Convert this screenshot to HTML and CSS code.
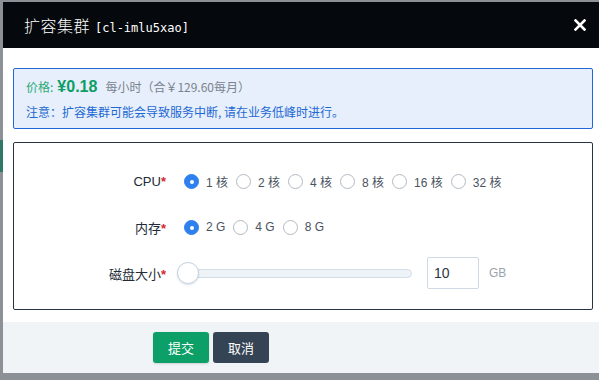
FILE: index.html
```html
<!DOCTYPE html>
<html lang="zh-CN">
<head>
    <meta charset="UTF-8">
    <title>扩容集群</title>
    <link rel="stylesheet" href="styles.css">
</head>
<body>

    <!-- Okno dialogowe -->
    <div class="modal">
        <div class="modal-header">
            <h3 class="modal-title">扩容集群 <span class="cluster-id">[cl-imlu5xao]</span></h3>
            <button class="close-btn" aria-label="关闭">
                <svg width="12" height="12" viewBox="0 0 12 12">
                    <path d="M1.5 1.5 L10.5 10.5 M10.5 1.5 L1.5 10.5" stroke="#fff" stroke-width="2.6" stroke-linecap="square"/>
                </svg>
            </button>
        </div>

        <div class="modal-body">
            <div class="notice">
                <p class="price">
                    <span class="price-label">价格:</span>
                    <span class="price-value">¥0.18</span>
                    <span class="price-unit">每小时（合￥129.60每月）</span>
                </p>
                <p class="warning">注意：扩容集群可能会导致服务中断, 请在业务低峰时进行。</p>
            </div>

            <div class="form-box">
                <div class="form-row">
                    <span class="form-label">CPU<i>*</i></span>
                    <div class="radio-group">
                        <label class="radio checked"><span class="dot"></span>1 核</label>
                        <label class="radio"><span class="dot"></span>2 核</label>
                        <label class="radio"><span class="dot"></span>4 核</label>
                        <label class="radio"><span class="dot"></span>8 核</label>
                        <label class="radio"><span class="dot"></span>16 核</label>
                        <label class="radio"><span class="dot"></span>32 核</label>
                    </div>
                </div>
                <div class="form-row">
                    <span class="form-label">内存<i>*</i></span>
                    <div class="radio-group">
                        <label class="radio checked"><span class="dot"></span>2 G</label>
                        <label class="radio"><span class="dot"></span>4 G</label>
                        <label class="radio"><span class="dot"></span>8 G</label>
                    </div>
                </div>
                <div class="form-row">
                    <span class="form-label">磁盘大小<i>*</i></span>
                    <div class="disk">
                        <div class="slider">
                            <div class="track"></div>
                            <div class="knob"></div>
                        </div>
                        <div class="num-input">10</div>
                        <span class="unit">GB</span>
                    </div>
                </div>
            </div>
        </div>

        <div class="modal-footer">
            <button class="btn btn-submit">提交</button>
            <button class="btn btn-cancel">取消</button>
        </div>
    </div>

</body>
</html>
```

FILE: styles.css
```css
body {
    margin: 0;
    height: 380px;
    overflow: hidden;
    font-family: "Liberation Sans", "Noto Sans CJK SC", sans-serif;
    background-color: #8c9197;
    background-image: linear-gradient(#2e7865, #2e7865);
    background-size: 3px 32px;
    background-position: 0 140px;
    background-repeat: no-repeat;
}

/* Okno */
.modal {
    width: 600px;
    margin: 2px 0 0 3px;
    background-color: #fff;
}

.modal-header {
    height: 46px;
    background-color: #05090d;
    display: flex;
    align-items: center;
    justify-content: space-between;
    padding: 0 10px 0 21px;
    box-sizing: border-box;
}

.modal-title {
    margin: 0;
    color: #fff;
    font-size: 16px;
    font-weight: 300;
    letter-spacing: 0.5px;
}

.cluster-id {
    font-family: "DejaVu Sans Mono", monospace;
    font-size: 12px;
    letter-spacing: 0;
}

.close-btn {
    background: none;
    border: none;
    padding: 0;
    width: 12px;
    height: 12px;
    margin-right: 7px;
    display: flex;
}

.modal-body {
    padding: 20px 10px 12px;
}

/* Ramka z cena */
.notice {
    height: 61px;
    box-sizing: border-box;
    background-color: #e6effb;
    border: 1px solid #2068d8;
    border-radius: 2px;
    padding: 9px 12px 0;
    font-size: 12px;
}

.notice p {
    margin: 0;
    font-family: "Noto Sans CJK SC", sans-serif;
}

.price {
    height: 18px;
    display: flex;
    align-items: baseline;
}

.price-label {
    color: #2cab78;
}

.price-value {
    font-family: "Liberation Sans", sans-serif;
    color: #0d9d66;
    font-weight: bold;
    font-size: 16px;
    margin: 0 8px 0 4px;
}

.price-unit {
    color: #7a838d;
}

.warning {
    margin-top: 7px !important;
    color: #1e69d3;
}

/* Formularz */
.form-box {
    margin-top: 13px;
    height: 168px;
    box-sizing: border-box;
    border: 1px solid #263441;
    border-radius: 2px;
    padding: 22px 0 0;
    display: flex;
    flex-direction: column;
    gap: 14px;
}

.form-row {
    height: 32px;
    display: flex;
    align-items: center;
}

.form-label {
    width: 152px;
    text-align: right;
    font-size: 13px;
    color: #222c37;
    font-family: "Liberation Sans", "Noto Sans CJK SC", sans-serif;
}

.form-label i {
    color: #d9262d;
    font-style: normal;
    font-weight: bold;
}

.radio-group {
    display: flex;
    align-items: center;
    margin-left: 18px;
}

.radio {
    display: flex;
    align-items: center;
    font-size: 12px;
    color: #4a5360;
    margin-right: 8px;
    font-family: "Liberation Sans", "Noto Sans CJK SC", sans-serif;
}

.radio .dot {
    width: 13px;
    height: 13px;
    border: 1px solid #b3bac2;
    border-radius: 50%;
    background: #fff;
    margin-right: 7px;
    box-sizing: content-box;
}

.radio.checked .dot {
    background-color: #2f80ee;
    border-color: #2f80ee;
    position: relative;
}

.radio.checked .dot::after {
    content: "";
    position: absolute;
    left: 5px;
    top: 5px;
    width: 4px;
    height: 4px;
    border-radius: 50%;
    background: #fff;
}

/* Suwak dysku */
.disk {
    display: flex;
    align-items: center;
    margin-left: 11px;
}

.slider {
    position: relative;
    width: 235px;
    height: 24px;
    display: flex;
    align-items: center;
}

.track {
    width: 100%;
    height: 9px;
    box-sizing: border-box;
    background-color: #eef3f8;
    border: 1px solid #d3dde7;
    border-radius: 5px;
}

.knob {
    position: absolute;
    left: 0;
    top: 1px;
    width: 22px;
    height: 22px;
    box-sizing: border-box;
    border-radius: 50%;
    background: #fff;
    border: 1px solid #c7d3de;
    box-shadow: 0 1px 2px rgba(120, 140, 160, 0.25);
}

.num-input {
    width: 52px;
    height: 32px;
    box-sizing: border-box;
    margin-left: 15px;
    border: 1px solid #cddae5;
    border-radius: 2px;
    padding: 0 6px;
    display: flex;
    align-items: center;
    font-size: 14px;
    color: #2b3540;
}

.unit {
    margin-left: 10px;
    font-size: 12px;
    color: #9aa3ad;
}

/* Stopka */
.modal-footer {
    height: 51px;
    box-sizing: border-box;
    background-color: #f0f4f7;
    padding: 10px 0 0 150px;
    display: flex;
    gap: 4px;
}

.btn {
    width: 56px;
    height: 31px;
    border: none;
    border-radius: 3px;
    color: #fff;
    font-size: 13px;
    font-family: "Noto Sans CJK SC", sans-serif;
    cursor: pointer;
}

.btn-submit {
    background-color: #0ca068;
    box-shadow: 0 1px 2px rgba(0, 0, 0, 0.15);
}

.btn-cancel {
    background-color: #354455;
}
```
